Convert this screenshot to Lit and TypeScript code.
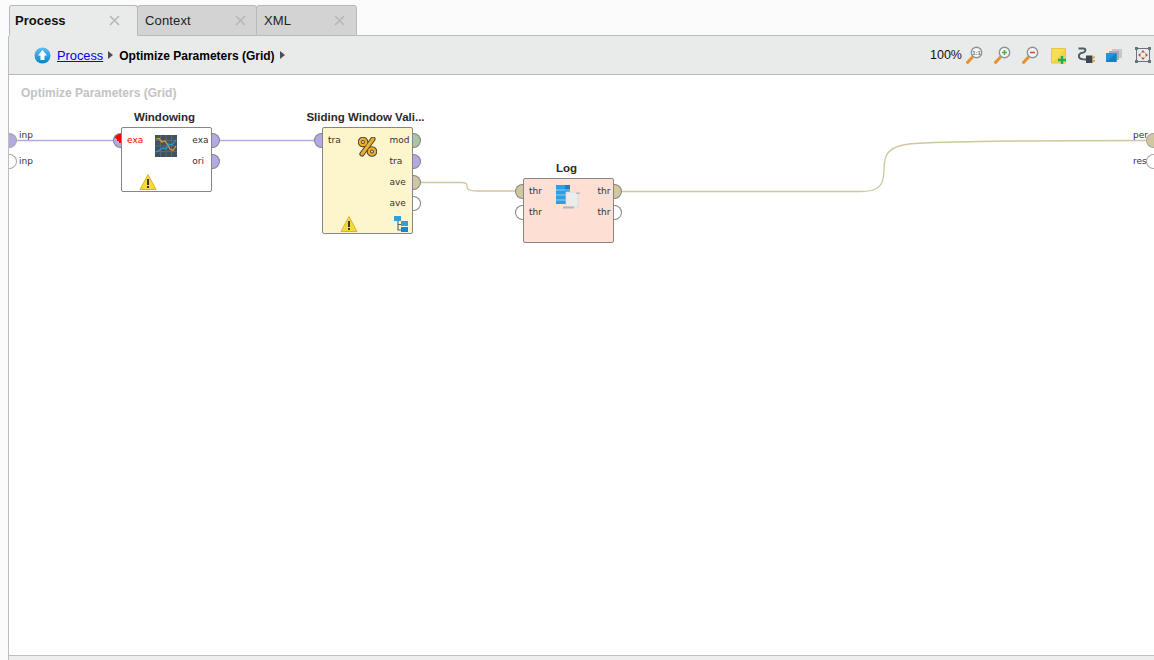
import { LitElement, html, css, svg } from "lit";
import { customElement } from "lit/decorators.js";

const PURPLE = "#b5a9e3";
const TAN = "#cfc79e";
const GREEN = "#a9c5a3";

type Port = { label: string; color?: string; req?: boolean; err?: boolean };
type Node = {
  title: string; x: number; y: number; h: number; cls: string;
  inputs: Port[]; outputs: Port[]; icon: unknown; extras: unknown;
};

const warn = (cx: number, cy: number) => svg`
  <g transform="translate(${cx - 9} ${cy - 9})">
    <path d="M9 1.5 L17 16.5 H1 Z" fill="#f7d83f" stroke="#dcb52a" stroke-width="1" stroke-linejoin="round"/>
    <rect x="8" y="6" width="2" height="6" fill="#3a3a2a"/>
    <rect x="8" y="13" width="2" height="2" fill="#3a3a2a"/>
  </g>`;

const seriesIcon = svg`
  <rect x="0" y="0" width="22" height="22" fill="#41535f"/>
  <path d="M0 5.5H22M0 11H22M0 16.5H22M5.5 0V22M11 0V22M16.5 0V22" stroke="#566a76" stroke-width="1"/>
  <path d="M1 4 L4 3.5 L7 7 L10 6 L13 10 L15 14 L18 15.5 L21 11" fill="none" stroke="#e59a2b" stroke-width="1.2"/>
  <path d="M1 17 L5 15 L8 13 L11 14 L14 9 L17 10 L21 5" fill="none" stroke="#2b9bdc" stroke-width="1.2"/>`;

const percentIcon = svg`
  <g fill="none" stroke-linecap="round">
    <path d="M15 2 L4 17" stroke="#44443a" stroke-width="5.2"/>
    <circle cx="5" cy="5" r="3.1" stroke="#44443a" stroke-width="4.4"/>
    <circle cx="14" cy="14.5" r="3.1" stroke="#44443a" stroke-width="4.4"/>
    <path d="M15 2 L4 17" stroke="#efae2e" stroke-width="3"/>
    <circle cx="5" cy="5" r="3.1" stroke="#efae2e" stroke-width="2.4"/>
    <circle cx="14" cy="14.5" r="3.1" stroke="#efae2e" stroke-width="2.4"/>
  </g>`;

const logIcon = svg`
  <rect x="0" y="0" width="14" height="19" fill="#2f9fe0"/>
  <rect x="9" y="0" width="5" height="19" fill="#1583c8"/>
  <path d="M0 5H14M0 10H14M0 15H14" stroke="#8fd0f2" stroke-width="1"/>
  <rect x="10" y="7" width="12" height="15" fill="#ececec" stroke="#dcdcdc"/>
  <path d="M20 7.5H24V8.8H20Z" fill="#b5b5b5"/>
  <path d="M7 21.5H18V23.5H7Z" fill="#b5b5b5"/>`;

const treeIcon = svg`
  <path d="M4 4V14H8M4 8.5H8" fill="none" stroke="#4f6068" stroke-width="1.1"/>
  <rect x="0" y="0" width="7" height="5" fill="#2f9fe0"/>
  <rect x="7" y="5" width="7" height="5" fill="#2f9fe0"/>
  <rect x="7" y="11" width="7" height="5" fill="#1d86c8"/>`;

const nodes: Node[] = [
  {
    title: "Windowing", x: 112, y: 52, h: 65, cls: "white",
    inputs: [{ label: "exa", color: PURPLE, err: true, req: true }],
    outputs: [{ label: "exa", color: PURPLE }, { label: "ori", color: PURPLE }],
    icon: html`<svg class="ic" style="left:33px;top:7px" width="22" height="22">${seriesIcon}</svg>`,
    extras: html`<svg class="ic" style="left:17px;top:45px" width="18" height="18">${warn(9, 9)}</svg>`,
  },
  {
    title: "Sliding Window Vali...", x: 313, y: 52, h: 107, cls: "yellow",
    inputs: [{ label: "tra", color: PURPLE }],
    outputs: [{ label: "mod", color: GREEN }, { label: "tra", color: PURPLE }, { label: "ave", color: TAN }, { label: "ave" }],
    icon: html`<svg class="ic" style="left:35px;top:9px" width="19" height="20">${percentIcon}</svg>`,
    extras: html`<svg class="ic" style="left:17px;top:87px" width="18" height="18">${warn(9, 9)}</svg>
      <svg class="ic" style="left:71px;top:88px" width="15" height="17">${treeIcon}</svg>`,
  },
  {
    title: "Log", x: 514, y: 103, h: 65, cls: "pink",
    inputs: [{ label: "thr", color: TAN }, { label: "thr" }],
    outputs: [{ label: "thr", color: TAN }, { label: "thr" }],
    icon: html`<svg class="ic" style="left:32px;top:6px" width="25" height="24">${logIcon}</svg>`,
    extras: "",
  },
];

const lens = (sym: unknown) => svg`
  <path d="M2.5 17.5 L7 12.5" stroke="#e8912c" stroke-width="3" stroke-linecap="round"/>
  <circle cx="11.5" cy="7.5" r="5.2" fill="#f2f3f3" stroke="#8c9498" stroke-width="1.4"/>
  ${sym}`;

const toolIcons = [
  lens(svg`<text x="11.5" y="10" text-anchor="middle" font-size="6" font-weight="700" font-family="Liberation Sans, sans-serif" fill="#6d7478">1:1</text>`),
  lens(svg`<path d="M9 7.5H14M11.5 5V10" stroke="#5fa83a" stroke-width="1.5"/>`),
  lens(svg`<path d="M9 7.5H14" stroke="#d9503a" stroke-width="1.6"/>`),
  svg`<path d="M2.5 3.5H16.5V18H2.5Z" fill="#f7de55" stroke="#e6c63d"/><path d="M3 18L16 4V11L10 18Z" fill="#f2cf42" opacity=".7"/>
      <path d="M13 11V19M9 15H17" stroke="#1fae5a" stroke-width="2.4"/>`,
  svg`<path d="M1.5 3.5H6.5C9 3.5 9 7 6.5 7.5C2 8.2 1.5 10 2 12C2.4 13.6 5 14.5 9 14.5" fill="none" stroke="#4e5e68" stroke-width="2"/>
      <rect x="9" y="10.5" width="6.5" height="7.5" fill="#3f464b"/>
      <rect x="15.5" y="11.5" width="2.5" height="1.8" fill="#e8a02c"/><rect x="15.5" y="15" width="2.5" height="1.8" fill="#e8a02c"/>`,
  svg`<rect x="7" y="4" width="10" height="9" fill="#c3c9cc"/><rect x="4" y="6" width="10" height="9" fill="#a3adb3"/>
      <rect x="1" y="8" width="10.5" height="9" fill="#1f96dc"/><path d="M1 17L11.5 8V17Z" fill="#147fc2"/>`,
  svg`<rect x="3.5" y="3.5" width="13" height="13" fill="none" stroke="#66757d" stroke-width="1"/>
      <path d="M2 2h3v3H2zM15 2h3v3h-3zM2 15h3v3H2zM15 15h3v3h-3z" fill="#66757d"/>
      <path d="M10 5l2 2.5H8zM10 15l2-2.5H8zM5 10l2.5-2v4zM15 10l-2.5-2v4z" fill="#cf4a2c"/>`,
];

const closeX = html`<svg class="x" width="11" height="11" viewBox="0 0 11 11"><path d="M1 1L10 10M10 1L1 10" stroke="#b8b8b8" stroke-width="1.7"/></svg>`;

@customElement("app-root")
export class AppRoot extends LitElement {
  static styles = css`
    :host { display: block; width: 1154px; height: 660px; overflow: hidden; background: #fbfbfb; font-family: "Liberation Sans", Arial, sans-serif; }
    .page { display: flex; flex-direction: column; height: 660px; padding-left: 8px; box-sizing: border-box; }
    .tabs { display: flex; height: 36px; padding-top: 5px; box-sizing: border-box; border-left: 1px solid transparent; }
    .tab { position: relative; height: 31px; box-sizing: border-box; display: flex; align-items: center; justify-content: space-between; border: 1px solid #b9b9b9; border-radius: 3px 3px 0 0; background: #d3d3d3; font-size: 13px; color: #222; letter-spacing: .15px; margin-left: -1px; }
    .tab.active { background: #e9ebeb; border-bottom-color: #e9ebeb; font-weight: 700; color: #111; letter-spacing: 0; z-index: 1; }
    .tab.t1 { width: 129px; padding: 0 17px 0 5px; margin-left: 0; }
    .tab.t2 { width: 120px; padding: 0 10px 0 7px; }
    .tab.t3 { width: 101px; padding: 0 11px 0 7px; }
    .tabs-rest { flex: 1; border-bottom: 1px solid #b9b9b9; margin-top: 30px; height: 0; }
    .x { display: block; }
    .toolbar { height: 39px; box-sizing: border-box; display: flex; align-items: center; background: #e9ebeb; border-left: 1px solid #bdbdbd; border-bottom: 1px solid #b9b9b9; padding: 0 1px 0 25px; }
    .crumbs { flex: 1; display: flex; align-items: center; font-size: 12px; }
    .up { margin-right: 6px; display: block; }
    .crumbs a { color: #0000ee; text-decoration: underline; font-size: 12.8px; }
    .tri { width: 0; height: 0; border-left: 5px solid #4a4f55; border-top: 4px solid transparent; border-bottom: 4px solid transparent; margin: 0 5px; }
    .crumbs b { color: #000; padding: 2px 0 0 1px; }
    .tools { display: flex; align-items: center; gap: 8px; }
    .pct { font-size: 12.5px; color: #111; margin-right: -5px; }
    .tools svg { display: block; }
    .canvas { position: relative; flex: 1; background: #fff; border-left: 1px solid #bdbdbd; }
    .heading { position: absolute; left: 12px; top: 11px; font-size: 12px; font-weight: 700; color: #c3c3c3; }
    .wires { position: absolute; inset: 0; }
    .node { position: absolute; width: 91px; box-sizing: border-box; border: 1px solid #868686; border-radius: 2px; display: flex; justify-content: space-between; padding-top: 2px; }
    .node.white { background: #fff; }
    .node.yellow { background: #fdf6cd; }
    .node.pink { background: #fde0d3; }
    .title { position: absolute; left: -32px; right: -28px; top: -17px; text-align: center; font-size: 11.5px; font-weight: 700; color: #2a2a2a; white-space: nowrap; }
    .col { display: flex; flex-direction: column; }
    .row { position: relative; height: 21px; line-height: 20px; font-family: "DejaVu Sans", sans-serif; font-size: 9px; color: #333; padding: 0 2.5px 0 5px; }
    .row.err { color: #f00; }
    .port { position: absolute; top: 2.5px; width: 8px; height: 15px; box-sizing: border-box; border: 1.5px solid #858585; background: #fff; }
    .col.in .port { left: -9px; border-right: 0; border-radius: 8px 0 0 8px; }
    .col.out .port { right: -9px; border-left: 0; border-radius: 0 8px 8px 0; }
    .port.req { background: linear-gradient(45deg, #b5a9e3 50%, #f00 50%) !important; }
    .ic { position: absolute; display: block; }
    .edge { position: absolute; font-family: "DejaVu Sans", sans-serif; font-size: 9px; color: #333; line-height: 12px; }
    .eport { position: absolute; width: 8px; height: 15px; box-sizing: border-box; border: 1.5px solid #a8a8a8; background: #fff; }
    .eport.l { left: 0; border-left: 0; border-radius: 0 8px 8px 0; }
    .eport.r { right: 0; border-right: 0; border-radius: 8px 0 0 8px; }
    .bottom { height: 4px; background: #eeeeee; border-top: 1px solid #bdbdbd; border-left: 1px solid #bdbdbd; }
  `;

  private port(p: Port) {
    return html`<div class="row ${p.err ? "err" : ""}">
      <span class="port ${p.req ? "req" : ""}" style=${p.color ? `background:${p.color}` : ""}></span>${p.label}
    </div>`;
  }

  render() {
    return html`<div class="page">
      <div class="tabs">
        <div class="tab active t1">Process ${closeX}</div>
        <div class="tab t2">Context ${closeX}</div>
        <div class="tab t3">XML ${closeX}</div>
        <div class="tabs-rest"></div>
      </div>
      <div class="toolbar">
        <div class="crumbs">
          <svg class="up" width="17" height="17" viewBox="0 0 17 17">
            <defs><linearGradient id="u" x1="0" y1="0" x2="0" y2="1"><stop offset="0" stop-color="#5cc0f2"/><stop offset="1" stop-color="#0f80c8"/></linearGradient></defs>
            <circle cx="8.5" cy="8.5" r="8" fill="url(#u)"/>
            <path d="M8.5 3L13 8.5H10.5V13H6.5V8.5H4Z" fill="#fff"/>
          </svg>
          <a>Process</a><span class="tri"></span><b>Optimize Parameters (Grid)</b><span class="tri"></span>
        </div>
        <div class="tools">
          <span class="pct">100%</span>
          ${toolIcons.map((i) => html`<svg width="20" height="20" viewBox="0 0 20 20">${i}</svg>`)}
        </div>
      </div>
      <div class="canvas">
        <div class="heading">Optimize Parameters (Grid)</div>
        <svg class="wires" width="1146" height="581" viewBox="0 0 1146 581">
          <g fill="none" stroke-width="1.3">
            <path d="M4 65.5H105" stroke=${PURPLE}/>
            <path d="M210 65.5H306" stroke=${PURPLE}/>
            <path d="M410 107.5H452C459 107.5 458 110 458 112C458 115 461 116 468 116H507" stroke=${TAN}/>
            <path d="M611 116.5H852C870 116.5 875 110 875 95C875 80 878 72 900 69C930 66 1000 65.5 1138 65.5" stroke=${TAN}/>
          </g>
        </svg>
        <span class="eport l" style="top:57.5px;background:${PURPLE}"></span>
        <span class="eport l" style="top:78.5px"></span>
        <span class="edge" style="left:10px;top:54px">inp</span>
        <span class="edge" style="left:10px;top:80px">inp</span>
        <span class="eport r" style="top:57.5px;background:${TAN}"></span>
        <span class="eport r" style="top:78.5px"></span>
        <span class="edge" style="left:1124px;top:54px">per</span>
        <span class="edge" style="left:1124px;top:80px">res</span>
        ${nodes.map((n) => html`
          <div class="node ${n.cls}" style="left:${n.x}px;top:${n.y}px;height:${n.h}px">
            <div class="title">${n.title}</div>
            <div class="col in">${n.inputs.map((p) => this.port(p))}</div>
            <div class="col out">${n.outputs.map((p) => this.port(p))}</div>
            ${n.icon}${n.extras}
          </div>`)}
      </div>
      <div class="bottom"></div>
    </div>`;
  }
}
